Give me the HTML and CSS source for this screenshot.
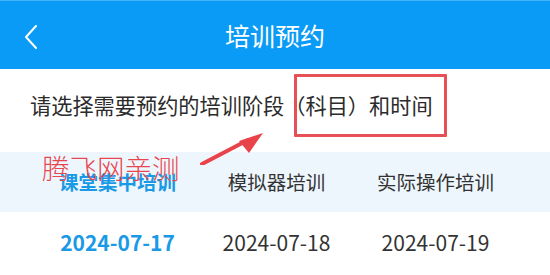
FILE: index.html
```html
<!DOCTYPE html>
<html lang="zh-CN">
<head>
    <meta charset="UTF-8">
    <title>培训预约</title>
    <meta name="viewport" content="width=device-width, initial-scale=1.0">
    <link rel="stylesheet" href="styles.css">
</head>
<body>
    <div class="header">
        <div class="back">
            <svg width="14" height="24" viewBox="0 0 14 24">
                <polyline points="12,1 2,12 12,23" fill="none" stroke="#fff" stroke-width="2" stroke-linecap="round" stroke-linejoin="round"/>
            </svg>
        </div>
        <div class="title">培训预约</div>
        <div></div>
    </div>

    <div class="page">
        <div class="intro">请选择需要预约的培训阶段<span class="mark">（科目）和时间</span></div>

        <div class="tabs">
            <div class="tab active">课堂集中培训</div>
            <div class="tab">模拟器培训</div>
            <div class="tab">实际操作培训</div>
        </div>

        <div class="dates">
            <div class="date active">2024-07-17</div>
            <div class="date">2024-07-18</div>
            <div class="date">2024-07-19</div>
        </div>

        <!-- 标注 -->
        <div class="watermark">腾飞网亲测</div>
        <svg class="arrow" width="80" height="40" viewBox="0 0 80 40">
            <line x1="12" y1="39" x2="58" y2="15" stroke="#e8434b" stroke-width="4" stroke-linecap="round"/>
            <polygon points="73,8 49,16 59,28" fill="#e8434b"/>
        </svg>
    </div>
</body>
</html>
```

FILE: styles.css
```css
body {
    margin: 0;
    padding: 0;
    width: 550px;
    height: 275px;
    overflow: hidden;
    background: #fff;
    font-family: "Noto Sans CJK SC", "Noto Sans", sans-serif;
    color: #333;
}
.header {
    height: 68px;
    border-top: 1px solid #45b4fb;
    background: #0a9bf6;
    display: grid;
    grid-template-columns: 70px 1fr 70px;
    align-items: center;
}
.back {
    padding-left: 24px;
    padding-top: 4px;
}
.back svg {
    display: block;
}
.title {
    text-align: center;
    color: #fff;
    font-size: 25px;
    line-height: 1;
}
.page {
    position: relative;
}
.intro {
    height: 83px;
    box-sizing: border-box;
    padding: 24px 0 0 30px;
    font-size: 21.2px;
    line-height: 24px;
    color: #2b2b2b;
}
.mark {
    position: relative;
}
.mark::after {
    content: "";
    position: absolute;
    left: 10px;
    right: -14px;
    top: -15px;
    bottom: -17px;
    border: 3px solid #e65158;
    border-radius: 1px;
}
.tabs, .dates {
    display: flex;
    padding-left: 38px;
}
.tabs {
    height: 60px;
    background: #eef6fd;
}
.tab, .date {
    width: 159px;
    text-align: center;
    line-height: 60px;
    font-size: 19.5px;
    color: #333;
}
.dates {
    height: 63px;
}
.date {
    font-size: 21px;
}
.tab.active, .date.active {
    color: #1a9ae6;
    font-weight: bold;
}
.watermark {
    position: absolute;
    left: 42px;
    top: 85px;
    font-size: 27.5px;
    line-height: 1;
    color: #e8464e;
    font-weight: 300;
}
.arrow {
    position: absolute;
    left: 190px;
    top: 56px;
}
```
